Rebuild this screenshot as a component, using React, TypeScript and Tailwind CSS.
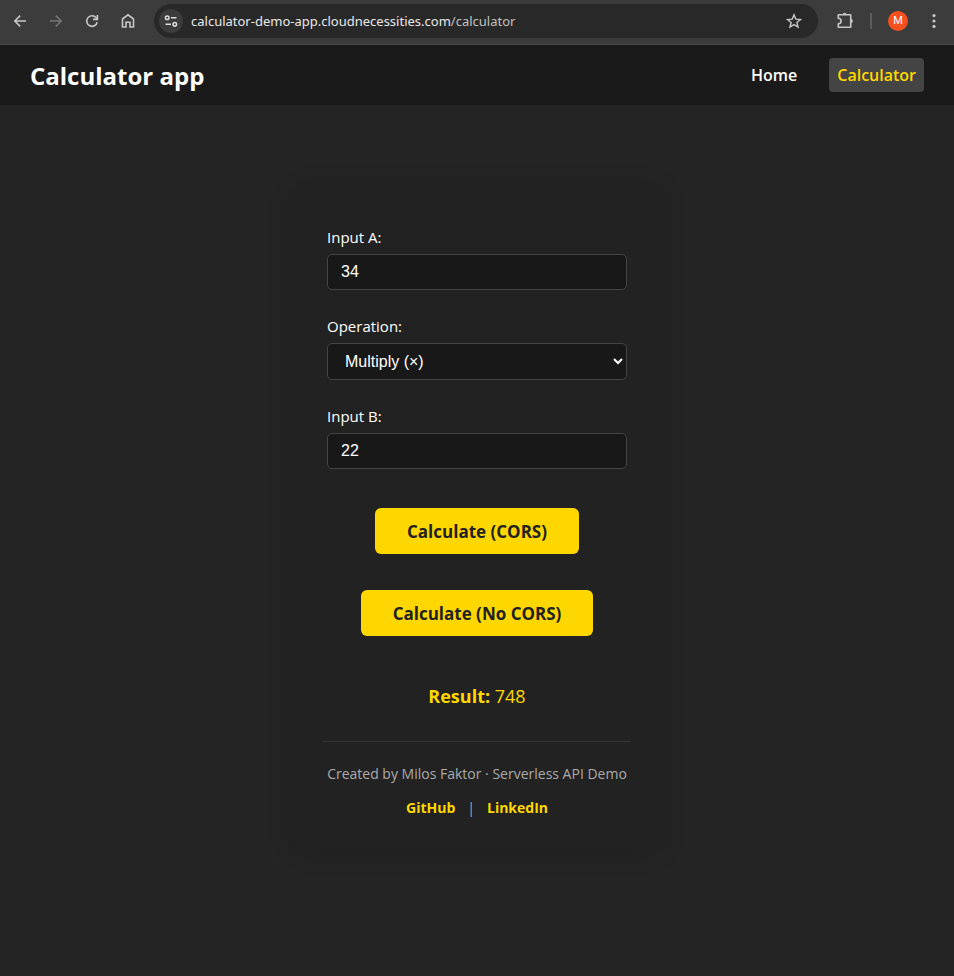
import { useState } from "react";

const iconButton =
  "flex h-7 w-7 shrink-0 items-center justify-center rounded-full text-[#c7c7c7] hover:bg-white/10";

function BrowserBar() {
  return (
    <div className="flex h-[45px] items-center border-b border-[#484848] bg-[#3c3c3c] px-[6px] pb-[2px] font-['Noto_Sans',sans-serif]">
      <div className="flex items-center gap-2">
        <button type="button" aria-label="Back" className={iconButton}>
          <svg width="16" height="16" viewBox="0 0 16 16" fill="none" stroke="currentColor" strokeWidth="1.6">
            <path d="M14 8H3M8.2 2.6 2.8 8l5.4 5.4" />
          </svg>
        </button>
        <button type="button" aria-label="Forward" className="flex h-7 w-7 shrink-0 items-center justify-center rounded-full text-[#757575]">
          <svg width="16" height="16" viewBox="0 0 16 16" fill="none" stroke="currentColor" strokeWidth="1.6">
            <path d="M2 8h11M7.8 2.6 13.2 8l-5.4 5.4" />
          </svg>
        </button>
        <button type="button" aria-label="Reload" className={iconButton}>
          <svg width="16" height="16" viewBox="0 0 16 16" fill="none" stroke="currentColor" strokeWidth="1.6">
            <path d="M13.2 9.2A5.3 5.3 0 1 1 12 4.5l1.3 1.5" />
            <path d="M13.4 2v4.4H9" />
          </svg>
        </button>
        <button type="button" aria-label="Home page" className={iconButton}>
          <svg width="16" height="16" viewBox="0 0 16 16" fill="none" stroke="currentColor" strokeWidth="1.6">
            <path d="M2.5 14V6L8 1.8 13.5 6v8H10V9.2H6V14z" />
          </svg>
        </button>
      </div>
      <div className="ml-3 flex h-[34px] min-w-0 flex-1 items-center rounded-full bg-[#282828] pr-[10px] pl-[5px]">
        <button
          type="button"
          aria-label="View site information"
          className="flex h-6 w-6 shrink-0 items-center justify-center rounded-full bg-[#3c3c3c] text-[#dedede]"
        >
          <svg width="16" height="16" viewBox="0 0 16 16" fill="none" stroke="currentColor" strokeWidth="1.5">
            <circle cx="4.2" cy="4.8" r="1.8" />
            <path d="M8 4.8h5.5M2.5 11.2H8" />
            <circle cx="11.8" cy="11.2" r="1.8" />
          </svg>
        </button>
        <div className="ml-2 min-w-0 flex-1 truncate text-[13px] leading-5 text-[#e8e8e8]">
          calculator-demo-app.cloudnecessities.com<span className="text-[#c0c0c0]">/calculator</span>
        </div>
        <button type="button" aria-label="Bookmark this tab" className={iconButton}>
          <svg width="16" height="16" viewBox="0 0 16 16" fill="none" stroke="currentColor" strokeWidth="1.4">
            <path d="m8 1.8 1.8 4.3 4.7.4-3.6 3 1.1 4.6L8 11.6l-4 2.5 1.1-4.6-3.6-3 4.7-.4z" />
          </svg>
        </button>
      </div>
      <div className="ml-[13px] flex items-center">
        <button type="button" aria-label="Extensions" className={iconButton}>
          <svg width="18" height="18" viewBox="0 0 18 18" fill="none" stroke="currentColor" strokeWidth="1.6">
            <path d="M2.3 2.8h12.4v12.4H2.3v-3.4a2.8 2.8 0 0 0 0-5.6z" strokeLinejoin="round" />
            <path d="M6.7 2.6a1.9 1.9 0 0 1 3.8 0zM15 7.1a1.9 1.9 0 0 1 0 3.8z" fill="currentColor" stroke="none" />
          </svg>
        </button>
        <div className="ml-[11px] h-4 w-[2px] bg-[#5c5c5c]" />
        <button
          type="button"
          aria-label="Profile"
          className="ml-4 flex h-5 w-5 items-center justify-center rounded-full bg-[#f4511e] font-['Roboto',sans-serif] text-[11px] text-white"
        >
          M
        </button>
        <button type="button" aria-label="Browser menu" className="ml-3 flex h-7 w-7 items-center justify-center text-[#c7c7c7]">
          <svg width="16" height="16" viewBox="0 0 16 16" fill="currentColor">
            <circle cx="8" cy="2.6" r="1.6" />
            <circle cx="8" cy="8" r="1.6" />
            <circle cx="8" cy="13.4" r="1.6" />
          </svg>
        </button>
      </div>
    </div>
  );
}

function SiteHeader() {
  return (
    <header className="flex h-[60px] items-center justify-between bg-[#1a1a1a] px-[30px]">
      <div className="pt-[2px] text-2xl font-bold text-white">Calculator app</div>
      <nav className="flex items-center gap-6 text-base leading-[26px] font-semibold">
        <a href="#home" className="rounded px-2 py-1 text-white">
          Home
        </a>
        <a href="#calculator" className="rounded bg-[#444444] px-2 py-1 text-[#ffd700]">
          Calculator
        </a>
      </nav>
    </header>
  );
}

const field =
  "w-full rounded-[5px] border border-[#444444] bg-[#181818] px-[13px] font-['Liberation_Sans',Arial,sans-serif] text-base text-white outline-none";
const fieldLabel = "text-[15px] leading-[22px] text-white";
const action = "h-[46px] rounded-md bg-[#ffd700] px-8 pt-[2px] text-[17px] font-bold text-[#222222]";

export default function App() {
  const [a, setA] = useState("34");
  const [b, setB] = useState("22");
  const [operation, setOperation] = useState("multiply");
  const [result, setResult] = useState("748");

  const calculate = () => {
    const x = Number(a);
    const y = Number(b);
    if (operation === "add") setResult(String(x + y));
    else if (operation === "subtract") setResult(String(x - y));
    else if (operation === "divide") setResult(String(x / y));
    else setResult(String(x * y));
  };

  return (
    <div className="flex min-h-screen flex-col bg-[#242424] font-['Open_Sans',sans-serif]">
      <BrowserBar />
      <SiteHeader />
      <main className="flex flex-1 justify-center px-4 pt-[77px] pb-16">
        <div className="flex w-full max-w-[374px] flex-col items-center self-start rounded-2xl bg-[#222222] px-8 pt-11 pb-[30px] shadow-[0_4px_24px_rgba(0,0,0,0.1)]">
          <form
            className="flex w-full max-w-[300px] flex-col items-center"
            onSubmit={(e) => {
              e.preventDefault();
              calculate();
            }}
          >
            <div className="flex w-full flex-col gap-[25px]">
              <div className="flex flex-col gap-[6px]">
                <label htmlFor="input-a" className={fieldLabel}>
                  Input A:
                </label>
                <input id="input-a" type="number" value={a} onChange={(e) => setA(e.target.value)} className={`${field} h-9`} />
              </div>
              <div className="flex flex-col gap-[6px]">
                <label htmlFor="operation" className={fieldLabel}>
                  Operation:
                </label>
                <select
                  id="operation"
                  value={operation}
                  onChange={(e) => setOperation(e.target.value)}
                  className={`${field} h-[37px]`}
                >
                  <option value="add">Add (+)</option>
                  <option value="subtract">Subtract (−)</option>
                  <option value="multiply">Multiply (×)</option>
                  <option value="divide">Divide (÷)</option>
                </select>
              </div>
              <div className="flex flex-col gap-[6px]">
                <label htmlFor="input-b" className={fieldLabel}>
                  Input B:
                </label>
                <input id="input-b" type="number" value={b} onChange={(e) => setB(e.target.value)} className={`${field} h-9`} />
              </div>
            </div>
            <button type="submit" className={`${action} mt-[39px]`}>
              Calculate (CORS)
            </button>
            <button type="button" onClick={calculate} className={`${action} mt-9`}>
              Calculate (No CORS)
            </button>
          </form>
          <p className="mt-[46px] text-lg leading-7 text-[#ffd700]">
            <strong className="font-bold">Result:</strong> {result}
          </p>
          <footer className="mt-[31px] flex w-full max-w-[308px] flex-col items-center border-t border-[#333333] pt-5 text-sm leading-6 text-[#aaaaaa]">
            <p>Created by Milos Faktor · Serverless API Demo</p>
            <p className="mt-[10px] flex gap-3">
              <a href="#github" className="font-bold text-[#ffd700]">
                GitHub
              </a>
              <span>|</span>
              <a href="#linkedin" className="font-bold text-[#ffd700]">
                LinkedIn
              </a>
            </p>
          </footer>
        </div>
      </main>
    </div>
  );
}
